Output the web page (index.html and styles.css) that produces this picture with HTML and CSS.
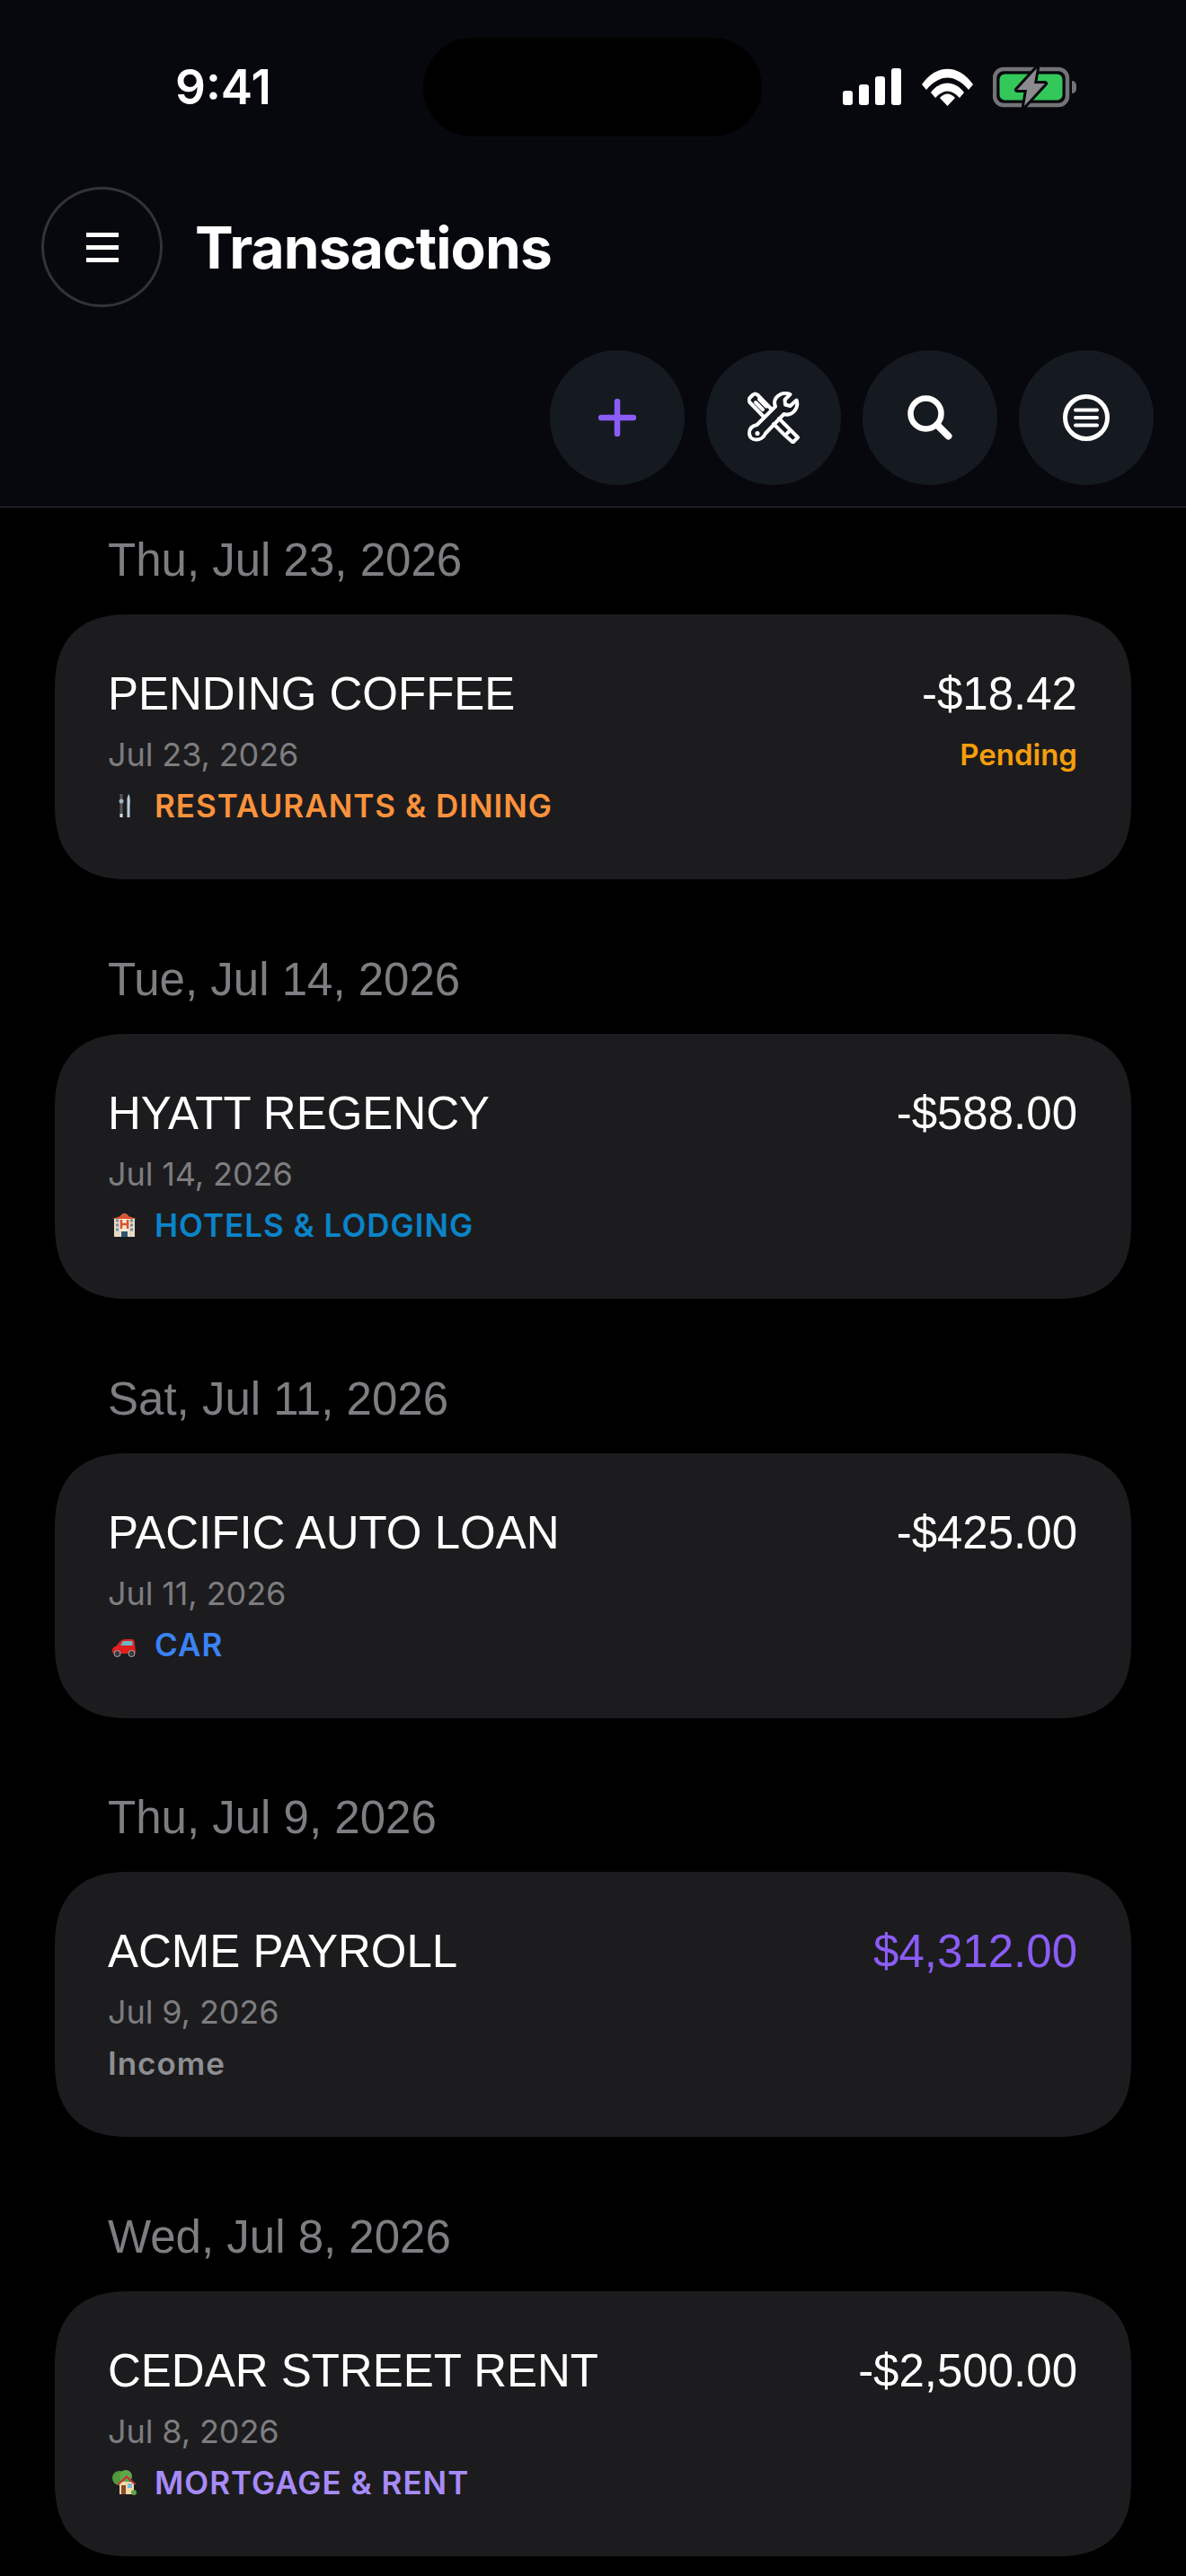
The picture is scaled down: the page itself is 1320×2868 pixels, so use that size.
FILE: index.html
```html
<!DOCTYPE html>
<html lang="en">
<head>
    <meta charset="UTF-8">
    <title>Transactions</title>
    <link rel="stylesheet" href="styles.css">
</head>
<body>

<header class="topbar">
    <div class="status">
        <span class="clock">9:41</span>
        <div class="island"></div>
        <div class="status-icons">
            <svg class="signal" width="65" height="42" viewBox="0 0 65 42">
                <rect x="0" y="25" width="11" height="16" rx="3"/>
                <rect x="18" y="18" width="11" height="23" rx="3"/>
                <rect x="36" y="9" width="11" height="32" rx="3"/>
                <rect x="54" y="0" width="11" height="41" rx="3"/>
            </svg>
            <svg class="wifi" width="57" height="42" viewBox="0 0 57 42">
                <path d="M0 18 C16 -5 41 -5 57 18 L52 24 C37 6 20 6 5 24 Z"/>
                <path d="M10 29 C20 15 37 15 47 29 L42 35 C33 25 24 25 15 35 Z" transform="translate(0 -2)"/>
                <path d="M20 33 C25 27 32 27 37 33 L28.500 42 Z"/>
            </svg>
            <svg class="battery" width="94" height="46" viewBox="0 0 94 46">
                <rect x="2" y="3" width="81" height="40" rx="10" fill="none" stroke="#747476" stroke-width="4.500"/>
                <rect x="7.500" y="8.500" width="70" height="29" rx="6" fill="#34c759"/>
                <path d="M88 16 C92 16 93 19 93 23 C93 27 92 30 88 30 Z" fill="#747476"/>
                <path d="M49 2 L27 26 H38 L35 44 L58 19 H46 Z" fill="#8b8b8e" stroke="#07090e" stroke-width="6" stroke-linejoin="round" paint-order="stroke"/>
            </svg>
        </div>
    </div>

    <div class="title-row">
        <button class="menu-btn">
            <svg width="36" height="33" viewBox="0 0 36 33">
                <path d="M0 2.500 H36 M0 16.500 H36 M0 30.500 H36" stroke="#fff" stroke-width="5"/>
            </svg>
        </button>
        <h1>Transactions</h1>
    </div>

    <div class="actions">
        <button class="round-btn">
            <svg width="42" height="42" viewBox="0 0 42 42">
                <path d="M21 3 V39 M3 21 H39" stroke="#8b5cf6" stroke-width="6.500" stroke-linecap="round"/>
            </svg>
        </button>
        <button class="round-btn">
            <svg width="58" height="58" viewBox="0 0 58 58" fill="none" stroke="#fff" stroke-width="4" stroke-linejoin="round" stroke-linecap="round">
                <path d="M27 20 L11 3.500 Q8.500 1.500 6 3.500 L2.500 7 Q0.500 9.500 2.500 12 L18 28"/>
                <path d="M9 12 L17 20 M13 8.500 L21 16.500"/>
                <path d="M35 30 L47.500 42.500 L56 51 L50.500 56.500 L42 49 L29 36"/>
                <path d="M46 44.500 L44 46.500"/>
                <path d="M47.500 3 L41.500 9 L42 14.500 L47.500 16 L54.500 9.500 C57.500 18 50 28 40.500 25 L20 46.500 C16 56 2 56 2 46 C2 40 6 38 10.500 37 L31 16.500 C27 7 38 -1 47.500 3 Z"/>
                <circle cx="11" cy="46.500" r="1.800" fill="#fff" stroke-width="1.500"/>
            </svg>
        </button>
        <button class="round-btn">
            <svg width="50" height="50" viewBox="0 0 50 50" fill="none" stroke="#fff" stroke-linecap="round">
                <circle cx="20.500" cy="20.500" r="17" stroke-width="6.500"/>
                <path d="M33 33 L45.500 45.500" stroke-width="8"/>
            </svg>
        </button>
        <button class="round-btn">
            <svg width="52" height="52" viewBox="0 0 52 52" fill="none" stroke="#fff" stroke-linecap="round">
                <circle cx="26" cy="26" r="23.500" stroke-width="5"/>
                <path d="M14 17.500 H38 M14 26 H38 M14 34.500 H38" stroke-width="4"/>
            </svg>
        </button>
    </div>
</header>

<main class="list">

    <section class="day">
        <h2 class="day-label">Thu, Jul 23, 2026</h2>
        <article class="card">
            <div class="card-left">
                <div class="name">PENDING COFFEE</div>
                <div class="sub">Jul 23, 2026</div>
                <div class="cat cat-food">
                    <svg class="cat-icon" width="36" height="36" viewBox="0 0 36 36">
                        <path d="M15 5 V30" stroke="#55585c" stroke-width="3"/>
                        <circle cx="15" cy="13" r="2.500" fill="#9db4c4"/>
                        <path d="M13.500 27 H16.500 V31 H13.500 Z" fill="#d5dde2"/>
                        <path d="M23 5 C25 7 25 14 24.500 18 V31 H21.500 V10 Z" fill="#b9cfdd"/>
                    </svg>
                    RESTAURANTS &amp; DINING
                </div>
            </div>
            <div class="card-right">
                <div class="amount">-$18.42</div>
                <div class="pending">Pending</div>
            </div>
        </article>
    </section>

    <section class="day">
        <h2 class="day-label">Tue, Jul 14, 2026</h2>
        <article class="card">
            <div class="card-left">
                <div class="name">HYATT REGENCY</div>
                <div class="sub">Jul 14, 2026</div>
                <div class="cat cat-hotel">
                    <svg class="cat-icon" width="36" height="36" viewBox="0 0 36 36">
                        <path d="M7 10 H30 V31 H7 Z" fill="#eadbc4"/>
                        <path d="M14 8 Q18.500 2 23 8 V31 H14 Z" fill="#f5e8d6"/>
                        <path d="M5 11 L14 8 Q18.500 2 23 8 L32 11 Z" fill="#d9542f"/>
                        <path d="M15 12 V22 M22 12 V22 M15 17 H22" stroke="#d9542f" stroke-width="2.500" fill="none"/>
                        <path d="M9 13 H12 M9 18 H12 M9 23 H12 M25 13 H28 M25 18 H28 M25 23 H28" stroke="#6f8ea6" stroke-width="3"/>
                        <rect x="15" y="25" width="7" height="6" fill="#2f5573"/>
                    </svg>
                    HOTELS &amp; LODGING
                </div>
            </div>
            <div class="card-right">
                <div class="amount">-$588.00</div>
            </div>
        </article>
    </section>

    <section class="day">
        <h2 class="day-label">Sat, Jul 11, 2026</h2>
        <article class="card">
            <div class="card-left">
                <div class="name">PACIFIC AUTO LOAN</div>
                <div class="sub">Jul 11, 2026</div>
                <div class="cat cat-car">
                    <svg class="cat-icon" width="36" height="36" viewBox="0 0 36 36">
                        <path d="M5 27 Q4 21 9 20 L14 14 Q16 12 20 12 H26 Q30 12 30 17 L31 26 Q31 28 28 28 H7 Z" fill="#e01f1f"/>
                        <path d="M14 19 L17 14 H27 L28 19 Z" fill="#6bb7c4"/>
                        <circle cx="10.500" cy="28" r="3.500" fill="#3a3a3a" stroke="#aaa" stroke-width="1"/>
                        <circle cx="26.500" cy="28" r="3.500" fill="#3a3a3a" stroke="#aaa" stroke-width="1"/>
                    </svg>
                    CAR
                </div>
            </div>
            <div class="card-right">
                <div class="amount">-$425.00</div>
            </div>
        </article>
    </section>

    <section class="day">
        <h2 class="day-label">Thu, Jul 9, 2026</h2>
        <article class="card">
            <div class="card-left">
                <div class="name">ACME PAYROLL</div>
                <div class="sub">Jul 9, 2026</div>
                <div class="cat cat-income">Income</div>
            </div>
            <div class="card-right">
                <div class="amount amount-in">$4,312.00</div>
            </div>
        </article>
    </section>

    <section class="day">
        <h2 class="day-label">Wed, Jul 8, 2026</h2>
        <article class="card">
            <div class="card-left">
                <div class="name">CEDAR STREET RENT</div>
                <div class="sub">Jul 8, 2026</div>
                <div class="cat cat-rent">
                    <svg class="cat-icon" width="36" height="36" viewBox="0 0 36 36">
                        <circle cx="13" cy="13" r="8" fill="#4f9a3c"/>
                        <circle cx="20" cy="11" r="7" fill="#5fa84a"/>
                        <path d="M13 17 H29 V31 H13 Z" fill="#f3d9a8"/>
                        <path d="M10 20 L21 10 L32 20 L29 20 L21 13 L13 20 Z" fill="#c8333a"/>
                        <rect x="15" y="21" width="5" height="10" fill="#8a4a2c"/>
                        <rect x="22" y="19" width="5" height="5" fill="#7cb9dc"/>
                        <circle cx="29" cy="29" r="3" fill="#5aa845"/>
                    </svg>
                    MORTGAGE &amp; RENT
                </div>
            </div>
            <div class="card-right">
                <div class="amount">-$2,500.00</div>
            </div>
        </article>
    </section>

</main>

</body>
</html>
```

FILE: styles.css
```css
* {
    box-sizing: border-box;
}

html, body {
    margin: 0;
    height: 2868px;
    overflow: hidden;
    background-color: black;
    color: white;
}

h1, h2 {
    margin: 0;
}

button {
    border: none;
    padding: 0;
    background: none;
    display: flex;
    align-items: center;
    justify-content: center;
}

.topbar {
    height: 565px;
    background-color: #06080d;
    border-bottom: 1px solid #333336;
}

.status {
    position: relative;
    height: 194px;
    padding: 0 121px 0 195px;
    display: flex;
    align-items: center;
    justify-content: space-between;
}

.clock {
    font-family: Inter, sans-serif;
    font-weight: 600;
    font-size: 53px;
    line-height: 1;
}

.island {
    position: absolute;
    left: 471px;
    top: 42px;
    width: 377px;
    height: 110px;
    border-radius: 55px;
    background-color: black;
}

.status-icons {
    display: flex;
    align-items: center;
    gap: 23px;
}

.status-icons svg {
    fill: white;
    display: block;
}

.battery {
    margin-left: -1px;
}

.title-row {
    margin-top: 14px;
    padding-left: 46px;
    display: flex;
    align-items: center;
    gap: 36px;
}

.menu-btn {
    width: 135px;
    height: 134px;
    border: 3px solid #333336;
    border-radius: 50%;
}

h1 {
    font-family: Inter, sans-serif;
    font-weight: 700;
    font-size: 64px;
    letter-spacing: -0.900px;
}

.actions {
    margin-top: 48px;
    padding-right: 36px;
    display: flex;
    justify-content: flex-end;
    gap: 24px;
}

.round-btn {
    width: 150px;
    height: 150px;
    border-radius: 50%;
    background-color: #151a21;
}

.list {
    padding: 30px 61px 0;
}

.day {
    margin-bottom: 82.750px;
}

.day-label {
    height: 58px;
    margin-bottom: 31px;
    padding-left: 59px;
    font-family: "Liberation Sans", sans-serif;
    font-weight: 400;
    font-size: 51px;
    line-height: 58px;
    color: #7e7e82;
}

.card {
    height: 295px;
    padding: 59px 60px 60px 59px;
    border-radius: 84px;
    corner-shape: superellipse(1.3);
    background-color: #1c1c1e;
    display: flex;
    justify-content: space-between;
}

.name, .amount {
    height: 60px;
    font-family: "Liberation Sans", sans-serif;
    font-size: 51px;
    line-height: 60px;
}

.sub, .pending {
    height: 44px;
    margin-top: 15px;
    line-height: 44px;
    font-family: Inter, sans-serif;
}

.sub {
    font-size: 36px;
    letter-spacing: -0.100px;
    color: #7d7d80;
}

.pending {
    text-align: right;
    font-size: 33px;
    font-weight: 600;
    color: #f59e0b;
}

.amount {
    text-align: right;
}

.amount-in {
    color: #8b5cf6;
}

.cat {
    height: 44px;
    margin-top: 13px;
    font-family: Inter, sans-serif;
    font-weight: 600;
    font-size: 35px;
    letter-spacing: 1px;
    line-height: 44px;
    display: flex;
    align-items: center;
    gap: 16px;
}

.cat-food {
    color: #fb923c;
}

.cat-hotel {
    color: #0a84c9;
}

.cat-car {
    color: #3b82f6;
}

.cat-income {
    color: #8e8e93;
}

.cat-rent {
    color: #a78bfa;
}
```
